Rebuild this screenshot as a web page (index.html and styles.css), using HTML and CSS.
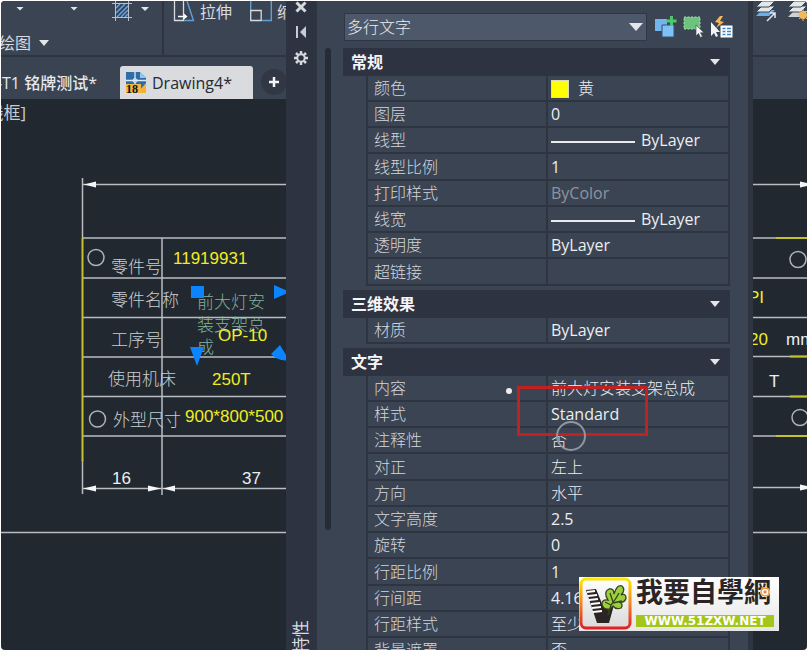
FILE: index.html
```html
<!DOCTYPE html>
<html lang="zh-CN">
<head>
<meta charset="utf-8">
<title>Drawing4</title>
<link rel="stylesheet" href="styles.css">
</head>
<body>
<div class="app">
  <section class="workspace">
    <div class="ribbon">
      <div class="ribbon-group draw-group">
        <div class="ribbon-tools">
          <button class="tool" aria-label="圆弧选项"><i class="caret small"></i></button>
          <button class="tool" aria-label="矩形选项"><i class="caret small"></i></button>
          <button class="tool hatch" aria-label="图案填充">
            <svg width="22" height="22" viewBox="0 0 22 22" fill="none">
              <path d="M5 3h12v13H5z" fill="#33465f"/>
              <path d="M5 7l4-4M5 12l9-9M6 16L17 5M10 16l7-7M14 16l3-3" stroke="#70a6dc" stroke-width="1.4"/>
              <path d="M1 2.500h20M1 16.500h20M4.500 0v20M17.500 0v20" stroke="#b9c0ca"/>
            </svg>
            <i class="caret small"></i>
          </button>
        </div>
        <button class="group-title">绘图<i class="caret"></i></button>
      </div>
      <div class="ribbon-group modify-group">
        <button class="tool">
          <svg width="22" height="22" viewBox="0 0 22 22" fill="none">
            <path d="M1.500 0v19.500h9V0" stroke="#d7dbe0" stroke-width="1.300"/>
            <path d="M14 0l6.500 19.500H11" stroke="#5f9fd2" stroke-width="1.400"/>
            <path d="M5 15.500h8M10.500 13l3 2.500-3 2.500" stroke="#fff" stroke-width="1.300"/>
          </svg>拉伸</button>
        <button class="tool">
          <svg width="22" height="22" viewBox="0 0 22 22" fill="none">
            <path d="M.7 9V0M12 19.500h9.300V0" stroke="#5f9fd2" stroke-width="1.400"/>
            <path d="M.7 9.500h10.500v10H.7z" stroke="#d7dbe0" stroke-width="1.300"/>
          </svg>缩放</button>
      </div>
    </div>
    <nav class="file-tabs">
      <a class="file-tab" href="#t1">-T1 铭牌测试*</a>
      <a class="file-tab active" href="#drawing4">
        <svg width="20" height="22" viewBox="0 0 20 22">
          <path d="M0 0h14l6 6v15H0z" fill="#2e6da8"/>
          <path d="M14 0l6 6h-6z" fill="#9cc5e6"/>
          <path d="M20 11v10h-9z" fill="#f3b32f"/><path d="M0 12h15v9H0z" fill="#f0b643"/>
          <path d="M0 8.500h20M9 0v12" stroke="#dcecf8" stroke-width="1.300"/>
          <circle cx="9" cy="8.500" r="2" fill="none" stroke="#dcecf8"/>
          <text x="0" y="21" class="badge">18</text>
        </svg>Drawing4*</a>
      <button class="new-tab" aria-label="新建">
        <svg width="12" height="12" viewBox="0 0 12 12"><path d="M6 1v10M1 6h10" stroke="#f4f5f6" stroke-width="2.500"/></svg>
      </button>
    </nav>
    <svg class="canvas" width="100%" height="100%">
      <g transform="translate(-1 -99)">
        <text class="view-label" x="26" y="119" text-anchor="end">线框]</text>
        <g class="ink">
          <path d="M82.500 178v60M82.500 460v34M83 184.500h210"/>
          <path d="M83 238h210M83 278h210M83 317.500h210M83 357h210M83 396.500h210M83 436h210M162 238v257"/>
          <path d="M83 488.500h210M0 532.500h293"/>
        </g>
        <path class="yellow-line" d="M82.500 238v223"/>
        <path class="head" d="M84 184.500l12-3v6zM83 488.500l13-3v6zM161 488.500l-13-3v6zM163 488.500l12-3v6z"/>
        <circle class="hole" cx="96" cy="257.500" r="8"/>
        <circle class="hole" cx="97.500" cy="419" r="8"/>
        <g class="caption">
          <text x="111" y="273">零件号</text>
          <text x="111" y="306">零件名称</text>
          <text x="111" y="346">工序号</text>
          <text x="108" y="385">使用机床</text>
          <text x="113" y="426">外型尺寸</text>
        </g>
        <g class="selected">
          <text x="197" y="308">前大灯安</text>
          <text x="197" y="331">装支架总</text>
          <text x="197" y="353">成</text>
        </g>
        <g class="value">
          <text x="173" y="264">11919931</text>
          <text x="218" y="341">OP-10</text>
          <text x="212" y="385">250T</text>
          <text x="185" y="422">900*800*500</text>
        </g>
        <g class="dimension">
          <text x="112" y="484">16</text>
          <text x="242" y="484">37</text>
        </g>
        <path class="grip" d="M191 286h13v12h-13zM274 285l16 7-16 7zM190 347h14l-7 19zM271 354l9-9 9 15q-10 2-18-6z"/>
      </g>
    </svg>
  </section>

  <aside class="palette">
    <div class="palette-strip">
      <button aria-label="关闭"><svg width="12" height="12" viewBox="0 0 12 12"><path d="M1.500 1.500l9 9M10.500 1.500l-9 9" stroke="#d5d8dd" stroke-width="3"/></svg></button>
      <button aria-label="自动隐藏"><svg width="12" height="12" viewBox="0 0 12 12"><path d="M1 0h2v12H1zM11 0v12L5 6z" fill="#c9cdd3"/></svg></button>
      <button aria-label="设置"><svg width="14" height="14" viewBox="0 0 14 14" fill="none" stroke="#d5d8dd"><circle cx="7" cy="7" r="3.700" stroke-width="2"/><path d="M7 0v3M7 11v3M0 7h3M11 7h3M2 2l2.200 2.200M9.800 9.800L12 12M12 2L9.800 4.200M4.200 9.800L2 12" stroke-width="2.500"/></svg></button>
      <span class="palette-title">特性</span>
    </div>
    <div class="palette-main">
      <div class="selector">
        <label class="hidden" for="kind">对象类型</label>
        <div class="select-wrap"><select id="kind"><option>多行文字</option></select><i class="caret large"></i></div>
        <button aria-label="切换 PICKADD">
          <svg width="22" height="22" viewBox="0 0 22 22"><path d="M0 3h12v12H0z" fill="#72b5ee"/><path d="M7 9h12v12H7z" fill="#7fc1f6" stroke="#345371"/><path d="M16.500 0v10M11.500 5h10" stroke="#4fc56c" stroke-width="3"/></svg>
        </button>
        <button aria-label="选择对象">
          <svg width="22" height="22" viewBox="0 0 22 22"><path d="M1 1h16v12H1z" fill="#6cc37e" stroke="#a5e0ab" stroke-dasharray="2 1.500"/><path d="M13 9v11l2.500-2.500 2 4 2-1-2-3.800H21z" fill="#f2f3f5" stroke="#38414f" stroke-width=".6"/></svg>
        </button>
        <button aria-label="快速选择">
          <svg width="22" height="22" viewBox="0 0 22 22"><path d="M9 0L4 6l4 1-3 5 8-6-4-1 3-5z" fill="#f2b75d"/><path d="M9.500 9.500h12v12h-12z" fill="#fff"/><path d="M11.500 12.500h3m1.500 0h4M11.500 15.500h3m1.500 0h4M11.500 18.500h3m1.500 0h4" stroke="#3787c9" stroke-width="1.500"/><path d="M0 6v14l3-3 2 4 2-1-2-4h4z" fill="#f2f3f5"/></svg>
        </button>
      </div>
      <div class="palette-body">
        <div class="scroll-track"></div>
        <div class="sections">
          <section>
            <button class="section-head">常规<i class="caret"></i></button>
            <table>
              <tr><th>颜色</th><td class="han"><span class="swatch"></span>黄</td></tr>
              <tr><th>图层</th><td>0</td></tr>
              <tr><th>线型</th><td><span class="line-sample"></span>ByLayer</td></tr>
              <tr><th>线型比例</th><td>1</td></tr>
              <tr><th>打印样式</th><td class="disabled">ByColor</td></tr>
              <tr><th>线宽</th><td><span class="line-sample"></span>ByLayer</td></tr>
              <tr><th>透明度</th><td>ByLayer</td></tr>
              <tr><th>超链接</th><td></td></tr>
            </table>
          </section>
          <section>
            <button class="section-head">三维效果<i class="caret"></i></button>
            <table>
              <tr><th>材质</th><td>ByLayer</td></tr>
            </table>
          </section>
          <section>
            <button class="section-head">文字<i class="caret"></i></button>
            <table>
              <tr><th>内容<span class="dot"></span></th><td class="han">前大灯安装支架总成</td></tr>
              <tr class="marked"><th>样式</th><td>Standard<span class="highlight"></span><span class="pointer"></span></td></tr>
              <tr><th>注释性</th><td class="han">否</td></tr>
              <tr><th>对正</th><td class="han">左上</td></tr>
              <tr><th>方向</th><td class="han">水平</td></tr>
              <tr><th>文字高度</th><td>2.5</td></tr>
              <tr><th>旋转</th><td>0</td></tr>
              <tr><th>行距比例</th><td>1</td></tr>
              <tr><th>行间距</th><td>4.1667</td></tr>
              <tr><th>行距样式</th><td class="han">至少</td></tr>
              <tr><th>背景遮罩</th><td class="han">否</td></tr>
            </table>
          </section>
        </div>
      </div>
    </div>
  </aside>

  <section class="workspace">
    <div class="ribbon layer-group">
      <button class="tool" aria-label="图层">
        <svg width="22" height="22" viewBox="0 0 22 22"><path d="M7 9h13l-6 6H1z" fill="#69afe9"/><path d="M7 5h13l-6 6H1z" fill="#e4e7ea" stroke="#3b4453"/><path d="M7 0h13l-6 6H1z" fill="#e4e7ea" stroke="#3b4453"/><path d="M12 20l8-8M15 12h5v5" fill="none" stroke="#e4e7ea" stroke-width="1.500"/></svg>
      </button>
      <button class="tool" aria-label="图层状态">
        <svg width="22" height="22" viewBox="0 0 22 22"><path d="M7 10h13l-6 6H1z" fill="#cfd3d8"/><path d="M7 5h13l-6 6H1z" fill="#e4e7ea" stroke="#3b4453"/><path d="M7 0h13l-6 6H1z" fill="#e4e7ea" stroke="#3b4453"/><circle cx="16" cy="14" r="4" fill="#f0b95e"/><path d="M16 8v12M10 14h12M12 10l8 8M20 10l-8 8" stroke="#f0b95e"/></svg>
      </button>
    </div>
    <div class="file-tabs"></div>
    <svg class="canvas" width="100%" height="100%">
      <g transform="translate(-753 -99)">
        <g class="ink">
          <path d="M753 184.500h60M753 238h60M753 278h60M753 317.500h60M753 356.500h60M753 396.500h60M753 436h60M753 487.500h60M753 532.500h60"/>
        </g>
        <path class="yellow-line" d="M776 238h60M790 356.500h50M790 396.500h50M776 436h60"/>
        <path class="head" d="M800 181.500l13 3-13 3zM800 484.500l13 3-13 3z"/>
        <circle class="hole" cx="798" cy="259.500" r="8"/>
        <circle class="hole" cx="800" cy="417.500" r="8"/>
        <g class="value">
          <text x="764" y="303" text-anchor="end">PI</text>
          <text x="768" y="345" text-anchor="end">20</text>
        </g>
        <g class="dimension">
          <text x="786" y="345">mm</text>
          <text x="769" y="387">T</text>
        </g>
      </g>
    </svg>
  </section>

  <a class="watermark" href="#site">
    <svg width="54" height="54" viewBox="0 0 54 54">
      <defs>
        <linearGradient id="frame" x1="0" y1="0" x2="0" y2="1"><stop offset="0" stop-color="#ffe600"/><stop offset=".5" stop-color="#f58220"/><stop offset="1" stop-color="#e01f26"/></linearGradient>
        <linearGradient id="plate" x1="0" y1="0" x2="0" y2="1"><stop offset="0" stop-color="#fff"/><stop offset="1" stop-color="#d9d9d9"/></linearGradient>
      </defs>
      <rect x="2" y="2" width="49" height="49" rx="5" fill="url(#plate)" stroke="url(#frame)" stroke-width="3"/>
      <path d="M7 13l10-1 7 17 3 1 3-1 5-1-5 18H18z" fill="#2a2524"/>
      <path d="M8 15l8-1M9 19l9-1M10 23l9-1M12 27l9-1M13 31l9-1M14 35l9-1" stroke="#fff" stroke-width="1.800"/>
      <path d="M31 32q-7 1-8-5 0-5 6-4-5-8 1-11 5-1 5 5 3-10 8-8 4 4-1 9 5-2 5 3-1 5-7 4 5 2 2 6-5 2-8-2z" fill="#9ccf3e" stroke="#36451d" stroke-width="1.300"/>
      <path d="M29 38l3-10q5-6 8-12M32 28l-6-3M34 25l-3-9M34 26l9-2" fill="none" stroke="#36451d" stroke-width="1.300"/>
    </svg>
    <span class="watermark-text">
      <span class="watermark-name">我要自學網<svg class="at" width="10" height="10" viewBox="0 0 10 10"><circle cx="5" cy="5" r="5" fill="#fff"/><circle cx="5" cy="5" r="4" fill="none" stroke="#f08b2c" stroke-width="1.300"/><circle cx="5" cy="5" r="1.700" fill="#f08b2c"/></svg></span>
      <span class="watermark-url">WWW.51ZXW.NET</span>
    </span>
  </a>
</div>
</body>
</html>
```
FILE: styles.css
```css
:root {
  --panel: #3b4453;
  --dark: #2d3341;
  --rule: #2e3541;
  --canvas: #212830;
  --text: #d8dbe0;
}

* { box-sizing: border-box; }

body {
  margin: 0;
  background: #fff;
  color: var(--text);
  font: 16px/20px "Open Sans", "Noto Sans CJK SC", sans-serif;
}

button, select {
  padding: 0;
  border: 0;
  background: none;
  color: inherit;
  font: inherit;
}

a { color: inherit; text-decoration: none; }
svg { flex: none; display: block; }

.hidden {
  position: absolute;
  width: 1px;
  height: 1px;
  overflow: hidden;
  clip-path: inset(50%);
}

.app {
  position: relative;
  display: grid;
  grid-template-columns: 285fr 467fr 54fr;
  grid-template-rows: minmax(0, 1fr);
  height: calc(100vh - 2px);
  margin: 1px 2px 1px 1px;
  overflow: hidden;
  border-radius: 4px;
  background: var(--canvas);
}

.caret {
  flex: none;
  width: 10px;
  height: 6px;
  background: #e3e5e8;
  clip-path: polygon(0 0, 100% 0, 50% 100%);
}
.caret.small { width: 8px; height: 4px; }
.caret.large { width: 14px; height: 8px; }

/* Drawing area */
.workspace {
  display: flex;
  flex-direction: column;
  min-width: 0;
  overflow: hidden;
}

.ribbon {
  flex: none;
  display: flex;
  height: 56px;
  overflow: hidden;
  border-bottom: 2px solid var(--rule);
  background: var(--panel);
}
.ribbon-group { flex: none; white-space: nowrap; }
.tool { display: flex; align-items: center; gap: 8px; }

.draw-group { width: 163px; border-right: 2px solid var(--rule); }
.ribbon-tools { display: flex; align-items: flex-start; height: 32px; }
.ribbon-tools .tool { height: 15px; padding-left: 15px; }
.ribbon-tools .tool + .tool { padding-left: 46px; }
.ribbon-tools .hatch.tool { height: 22px; align-items: flex-start; padding-left: 33px; }
.hatch .caret { margin-top: 6px; }
.group-title { display: flex; align-items: center; gap: 8px; margin-left: -2px; }

.modify-group { display: flex; align-items: flex-start; gap: 18px; padding-left: 9px; }
.modify-group .tool { gap: 5px; }

.file-tabs {
  flex: none;
  display: flex;
  align-items: flex-end;
  height: 42px;
  background: #394352;
  white-space: nowrap;
}
.file-tab {
  flex: none;
  display: flex;
  align-items: center;
  justify-content: flex-end;
  width: 119px;
  height: 33px;
  padding-right: 23px;
  color: #e6e8eb;
  font-weight: 500;
}
.file-tab.active {
  width: 133px;
  justify-content: flex-start;
  gap: 6px;
  padding: 0 0 0 6px;
  border-radius: 3px 3px 0 0;
  background: #dadbde;
  color: #252a33;
  font-weight: 400;
}
.badge { font: bold 12px "Liberation Serif", serif; fill: #111; }
.new-tab {
  flex: none;
  display: grid;
  place-items: center;
  width: 26px;
  height: 26px;
  margin: 0 0 4px 8px;
  border-radius: 50%;
  background: #313844;
}

.canvas { flex: 1; min-height: 0; }
.ink { fill: none; stroke: #b9bdc2; stroke-width: 1.500; }
.yellow-line { fill: none; stroke: #c5c12e; stroke-width: 2; }
.head { fill: #f4f5f6; }
.hole { fill: none; stroke: #aeb3b9; stroke-width: 1.500; }
.grip { fill: #0a84ff; }
.view-label { fill: #c8ccd1; font-size: 17px; }
.caption { fill: #c9cdd2; font: 300 17px "Noto Sans CJK SC", sans-serif; }
.selected { fill: #84b09a; font: 300 17px "Noto Sans CJK SC", sans-serif; }
.value { fill: #eeee20; font: 17px "Liberation Sans", sans-serif; }
.dimension { fill: #eceef0; font: 17px "Liberation Sans", sans-serif; }

/* Properties palette */
.palette {
  display: flex;
  min-width: 0;
  overflow: hidden;
  border-right: 5px solid var(--rule);
  background: var(--panel);
}
.palette-strip {
  flex: none;
  display: flex;
  flex-direction: column;
  align-items: center;
  gap: 13px;
  width: 31px;
  border-right: 1px solid var(--rule);
  background: var(--dark);
}
.palette-title {
  margin: auto 0 -4px;
  writing-mode: vertical-rl;
  text-orientation: sideways;
  transform: rotate(180deg);
  font-size: 17px;
}
.palette-main { flex: 1; display: flex; flex-direction: column; min-width: 0; }

.selector {
  flex: none;
  display: flex;
  align-items: center;
  gap: 6px;
  padding: 12px 15px 7px 27px;
}
.select-wrap {
  flex: 1;
  display: flex;
  align-items: center;
  height: 28px;
  padding: 0 3px 0 2px;
  margin-right: 2px;
  border: 1px solid #303744;
  background: #4d596b;
}
.selector select { flex: 1; appearance: none; font-weight: 300; color: #eceef0; }

.palette-body {
  flex: 1;
  display: flex;
  gap: 12px;
  min-height: 0;
  padding: 0 18px 0 8px;
}
.scroll-track { flex: none; width: 6px; height: 80%; border-radius: 3px; background: #262b38; }
.sections { flex: 1; min-width: 0; }
.sections section { margin-bottom: 4px; }
.section-head {
  display: flex;
  align-items: center;
  justify-content: space-between;
  width: 100%;
  height: 28px;
  padding: 0 10px 0 8px;
  background: var(--dark);
  color: #f4f5f6;
  font-weight: 700;
}

table {
  width: calc(100% - 23px);
  margin-left: 23px;
  border-collapse: separate;
  border-spacing: 0;
  table-layout: fixed;
  border-left: 2px solid var(--rule);
}
tr { height: 26px; }
tr:nth-child(4n) { height: 27px; }
th, td {
  padding: 0;
  border-right: 2px solid var(--rule);
  border-bottom: 2px solid var(--rule);
  text-align: left;
  white-space: nowrap;
  font-weight: 400;
}
th { width: 180px; padding-left: 6px; font-weight: 300; color: #d3d6db; }
td { padding-left: 3px; color: #eceef0; }
td.disabled { color: #8d949f; }
td.han { font-weight: 300; }

.swatch {
  display: inline-block;
  width: 18px;
  height: 18px;
  margin-right: 9px;
  border: 1px solid #d9d9c0;
  background: #ff0;
  vertical-align: middle;
}
.line-sample {
  display: inline-block;
  width: 84px;
  height: 2px;
  margin-right: 6px;
  background: #e8eaec;
  vertical-align: middle;
}
.dot {
  float: right;
  width: 6px;
  height: 6px;
  margin: 10px 34px 0 0;
  border-radius: 50%;
  background: #eceef0;
}

.marked td { position: relative; }
.highlight {
  position: absolute;
  top: -16px;
  left: -31px;
  width: 131px;
  height: 50px;
  border: 3px solid #c4201f;
}
.pointer {
  position: absolute;
  top: 19px;
  left: 8px;
  width: 30px;
  height: 30px;
  border: 2px solid #8f969f;
  border-radius: 50%;
}

.layer-group { gap: 10px; padding-left: 2px; align-items: flex-start; }

/* Site badge over the drawing */
.watermark {
  position: absolute;
  right: 28px;
  bottom: 19px;
  display: flex;
  gap: 3px;
  width: 200px;
  height: 54px;
  background: linear-gradient(#fff, #e6e6e6);
}
.watermark-text { display: flex; flex-direction: column; justify-content: space-between; padding: 0 0 4px; }
.watermark-name {
  position: relative;
  color: #2a2524;
  font: 700 27px/28px "Noto Sans CJK TC", sans-serif;
}
.at { position: absolute; right: 4px; top: 10px; }
.watermark-url {
  width: 138px;
  background: #a4c61a;
  color: #fff;
  font: bold 12px/12px "DejaVu Sans", sans-serif;
  text-align: center;
}
```
